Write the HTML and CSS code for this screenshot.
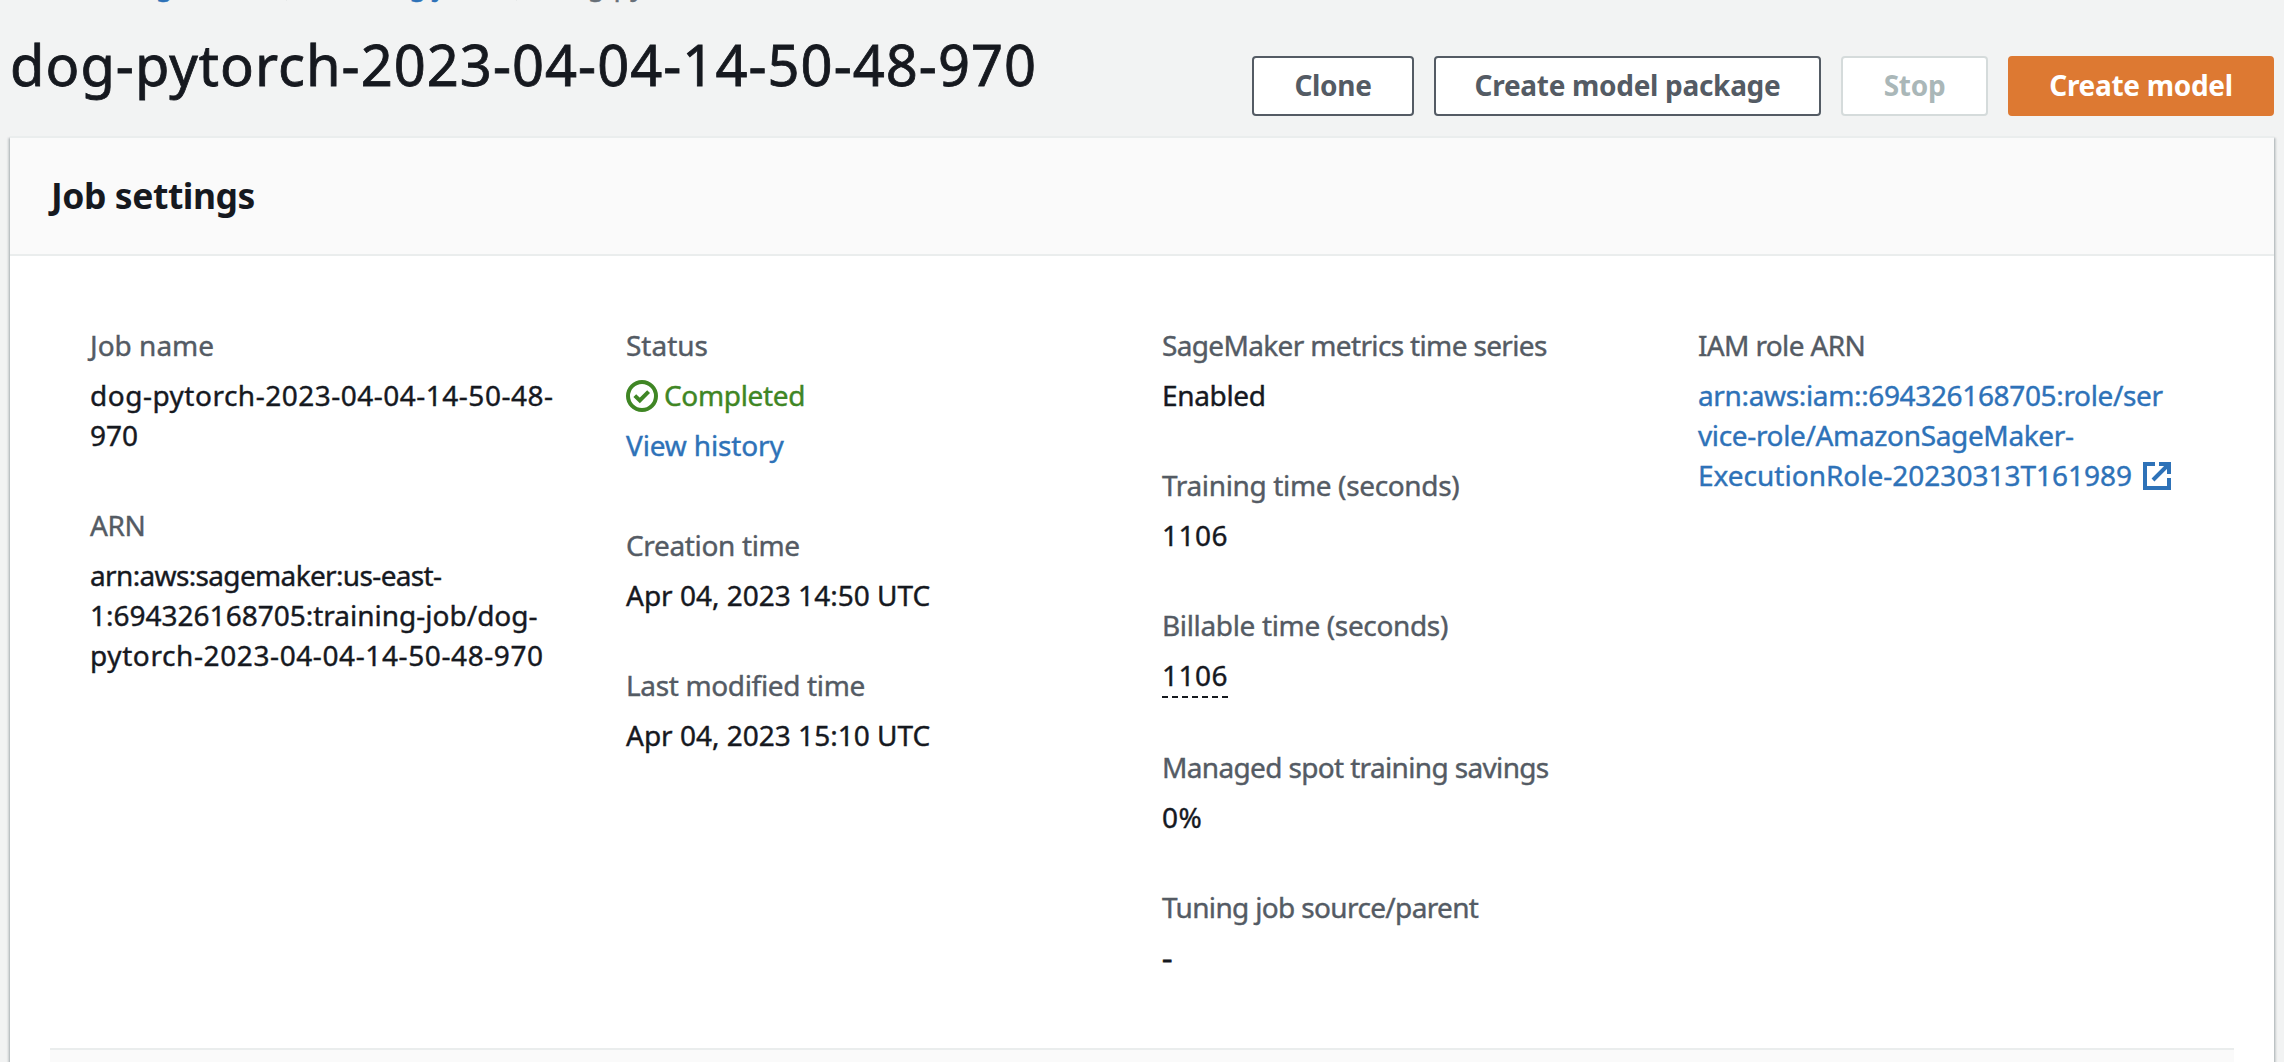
FILE: index.html
```html
<!DOCTYPE html>
<html lang="en">
<head>
<meta charset="utf-8">
<title>dog-pytorch-2023-04-04-14-50-48-970</title>
<link rel="stylesheet" href="styles.css">
</head>
<body>
<nav class="breadcrumb">
  <a class="crumb">Amazon SageMaker</a>
  <svg class="sep sep-first" viewBox="0 0 10 18"><path d="M1.5 1.5L8 9l-6.5 7.5"/></svg>
  <a class="crumb">Training jobs</a>
  <svg class="sep" viewBox="0 0 10 18"><path d="M1.5 1.5L8 9l-6.5 7.5"/></svg>
  <span>dog-pytorch-2023-04-04-14-50-48-970</span>
</nav>
<header class="page-header">
  <h1 class="title">dog-pytorch-2023-04-04-14-50-48-970</h1>
  <div class="actions">
    <button class="btn btn-clone">Clone</button>
    <button class="btn btn-package">Create model package</button>
    <button class="btn btn-stop" disabled>Stop</button>
    <button class="btn btn-create">Create model</button>
  </div>
</header>
<main class="panel">
  <div class="panel-head"><h2 class="panel-title">Job settings</h2></div>
  <div class="columns">
    <div class="col">
      <div class="field"><div class="label">Job name</div><div class="value"><span class="wide">dog-pytorch-2023-04-04-14-50-48-</span><br>970</div></div>
      <div class="field"><div class="label snug">ARN</div><div class="value"><span class="tight">arn:aws:sagemaker:us-east-</span><br>1:694326168705:training-job/dog-<br><span class="wider">pytorch-2023-04-04-14-50-48-970</span></div></div>
    </div>
    <div class="col">
      <div class="field"><div class="label">Status</div><div class="value status"><svg class="ok" viewBox="0 0 32 32"><circle cx="16" cy="16" r="14"/><path d="M8.8 15.6l5 4.8 8.8-8.8"/></svg><span class="snug">Completed</span></div><a class="history">View history</a></div>
      <div class="field"><div class="label snug">Creation time</div><div class="value">Apr 04, 2023 14:50 UTC</div></div>
      <div class="field"><div class="label snug">Last modified time</div><div class="value">Apr 04, 2023 15:10 UTC</div></div>
    </div>
    <div class="col">
      <div class="field"><div class="label tight">SageMaker metrics time series</div><div class="value snug">Enabled</div></div>
      <div class="field"><div class="label snug">Training time (seconds)</div><div class="value wide">1106</div></div>
      <div class="field"><div class="label snug">Billable time (seconds)</div><div class="value wide"><span class="hint">1106</span></div></div>
      <div class="field"><div class="label tight">Managed spot training savings</div><div class="value wider">0%</div></div>
      <div class="field"><div class="label tight">Tuning job source/parent</div><div class="value"><span class="dash">-</span></div></div>
    </div>
    <div class="col">
      <div class="field"><div class="label tight">IAM role ARN</div><a class="value link"><span class="snug">arn:aws:iam::694326168705:role/ser</span><br><span class="snug">vice-role/AmazonSageMaker-</span><br>ExecutionRole-20230313T161989<svg class="ext" viewBox="0 0 28 28"><path d="M12 2H2v24h24V16M16 2h10v10M26 2L10 18"/></svg></a></div>
    </div>
  </div>
  <div class="next-section"></div>
</main>
</body>
</html>
```
FILE: styles.css
```css
* { box-sizing: border-box; }
body {
  margin: 0;
  height: 1062px;
  overflow: hidden;
  background: #f2f3f3;
  color: #16191f;
  font: 28px/40px "Noto Sans", "Open Sans", sans-serif;
  white-space: nowrap;
  -webkit-text-stroke: 0.4px currentColor;
}
.breadcrumb { height: 40px; margin-top: -36px; padding-left: 10px; display: flex; color: #687078; }
.crumb { color: #2e72b8; }
.sep { width: 10px; height: 18px; margin: 19px 29px 0 26px; fill: none; stroke: #687078; stroke-width: 2.5; }
.sep-first { margin: 19px 25px 0 12px; }

.page-header { height: 132px; padding: 0 10px; display: flex; justify-content: space-between; }
.title { margin: 20px 0 0; font-size: 56px; line-height: 80px; font-weight: 400; letter-spacing: 1.03px; -webkit-text-stroke-width: 0.8px; }
.actions { display: flex; gap: 20px; margin-top: 52px; }
.btn {
  height: 60px;
  padding: 0 0 2px;
  font: 700 28px/40px "Noto Sans", "Open Sans", sans-serif;
  letter-spacing: -0.3px;
  color: #545b64;
  background: #fff;
  border: 2px solid #545b64;
  border-radius: 4px;
  -webkit-text-stroke-width: 0;
}
.btn-clone { width: 162px; }
.btn-package { width: 387px; }
.btn-stop { width: 147px; color: #aab7b8; border-color: #d5dbdb; }
.btn-create { width: 266px; color: #fff; background: #dd7932; border-color: #dd7932; }

.panel {
  margin: 0 10px;
  height: 926px;
  background: #fff;
  border-top: 2px solid #eaeded;
  box-shadow: 0 2px 2px rgba(0,28,36,.3), 2px 2px 2px rgba(0,28,36,.15), -2px 2px 2px rgba(0,28,36,.15);
}
.panel-head { height: 118px; background: #fafafa; border-bottom: 2px solid #eaeded; padding: 35px 41px 0; }
.panel-title { margin: 0; font-size: 35.5px; line-height: 44px; font-weight: 700; letter-spacing: -0.45px; -webkit-text-stroke-width: 0; }
.columns { display: grid; grid-template-columns: repeat(4, 536px); padding: 69px 0 0 80px; height: 792px; }
.field { margin-bottom: 50px; }
.label { color: #545b64; height: 40px; margin-bottom: 10px; }
.value { display: block; }
.snug { letter-spacing: -0.35px; }
.tight { letter-spacing: -0.65px; }
.wide { letter-spacing: 0.5px; }
.wider { letter-spacing: 0.6px; }
.link, .history { color: #2e72b8; }
.history { display: block; margin-top: 10px; padding-bottom: 10px; letter-spacing: -0.15px; }
.status { display: flex; align-items: center; gap: 6px; color: #3f8624; }
.ok { width: 32px; height: 32px; margin-top: 2px; fill: none; stroke: currentColor; stroke-width: 4; }
.ext { width: 28px; height: 28px; margin-left: 11px; vertical-align: -4px; fill: none; stroke: currentColor; stroke-width: 4; }
.hint {
  display: block;
  width: 66px;
  height: 43px;
  margin-bottom: -1px;
  background: repeating-linear-gradient(90deg, #16191f 0 6px, transparent 6px 10px) 0 100% / 100% 2px no-repeat;
}
.dash { display: inline-block; transform: scaleX(1.15); transform-origin: left; -webkit-text-stroke-width: 0.8px; }
.next-section { height: 14px; margin: 0 40px; background: #fafafa; border-top: 2px solid #eaeded; }
```
